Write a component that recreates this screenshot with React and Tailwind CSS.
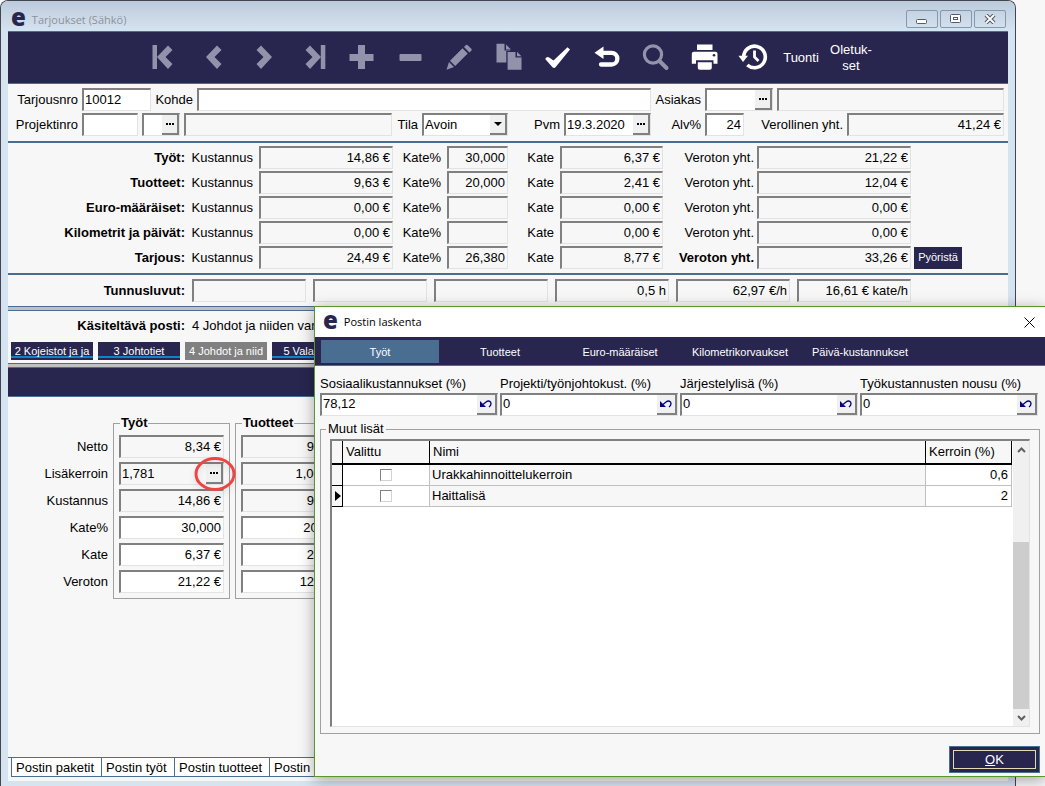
import { useState } from 'react';
import clsx from 'clsx';

const summaryRows = [
  { id: 'tyot', name: 'Työt:', cost: '14,86 €', pct: '30,000', margin: '6,37 €', total: '21,22 €' },
  { id: 'tuotteet', name: 'Tuotteet:', cost: '9,63 €', pct: '20,000', margin: '2,41 €', total: '12,04 €' },
  { id: 'euro', name: 'Euro-määräiset:', cost: '0,00 €', pct: '', margin: '0,00 €', total: '0,00 €' },
  { id: 'km', name: 'Kilometrit ja päivät:', cost: '0,00 €', pct: '', margin: '0,00 €', total: '0,00 €' },
  { id: 'tarjous', name: 'Tarjous:', cost: '24,49 €', pct: '26,380', margin: '8,77 €', total: '33,26 €' },
];

const keyFigures = ['', '', '', '0,5 h', '62,97 €/h', '16,61 € kate/h'];
const postTabs = ['2 Kojeistot ja ja', '3 Johtotiet', '4 Johdot ja niid', '5 Valaisimet'];
const bottomTabs = [
  { label: 'Postin paketit', width: 'w-[90px]' },
  { label: 'Postin työt', width: 'w-[73px]' },
  { label: 'Postin tuotteet', width: 'w-[95px]' },
  { label: 'Postin muut', width: 'w-[90px]' },
];
const dialogTabs = ['Työt', 'Tuotteet', 'Euro-määräiset', 'Kilometrikorvaukset', 'Päivä-kustannukset'];

const dialogFields = [
  { id: 'sosiaali', label: 'Sosiaalikustannukset (%)', value: '78,12' },
  { id: 'projekti', label: 'Projekti/työnjohtokust. (%)', value: '0' },
  { id: 'jarjestely', label: 'Järjestelylisä (%)', value: '0' },
  { id: 'nousu', label: 'Työkustannusten nousu (%)', value: '0' },
];

const extras = [
  { name: 'Urakkahinnoittelukerroin', factor: '0,6' },
  { name: 'Haittalisä', factor: '2' },
];

const postLabels = ['Netto', 'Lisäkerroin', 'Kustannus', 'Kate%', 'Kate', 'Veroton'];
const postColumns = [
  { title: 'Työt', values: ['8,34 €', '1,781', '14,86 €', '30,000', '6,37 €', '21,22 €'] },
  { title: 'Tuotteet', values: ['9,63 €', '1,000', '9,63 €', '20,000', '2,41 €', '12,04 €'] },
];

const sunken = 'border-t-2 border-l-2 border-r border-b border-t-[#808080] border-l-[#808080] border-r-[#e3e3e3] border-b-[#e3e3e3]';

const chevronLeft = '19,2.5 23.5,7 16.5,14 23.5,21 19,26 8,14';
const chevronRight = '14,2.5 9.5,7 16.5,14 9.5,21 14,26 25,14';

const tools = [
  { label: 'Ensimmäinen', icon: <><rect x="3.5" y="2" width="4.5" height="24" /><polygon points={chevronLeft} /></> },
  { label: 'Edellinen', icon: <polygon points={chevronLeft} /> },
  { label: 'Seuraava', icon: <polygon points={chevronRight} /> },
  { label: 'Viimeinen', icon: <><polygon points={chevronRight} /><rect x="24.8" y="2" width="4.5" height="24" /></> },
  { label: 'Lisää', icon: <path d="M13 2h7v9h8.500v7H20v8h-7v-8H4.500v-7H13z" /> },
  { label: 'Poista', icon: <rect x="5.500" y="11" width="22" height="7" rx="1" /> },
  { label: 'Muokkaa', icon: <path d="M3.500 26.700 6 19l5 5zM7 17.800 19.500 5.300l5.200 5.200L12.200 23zM21 3.900l1.700-1.700q1-1 2 0l3.600 3.600q1 1 0 2L26.400 9.400z" /> },
  { label: 'Kopioi', icon: <path d="M4.500.7H12.500V7.500H18V8H14.300V19.500H4.500zM14 1.500 19 6.500H14zM15.600 9H23.500V14.500H29.500V26.700H15.600zM25 8.800l4.500 4.500H25z" /> },
  { label: 'Hyväksy', on: true, icon: <path d="M4.200 16q1.500-3 4-1.500l4.300 3L26.500 4.200l2.500 2.400L14.500 24.300q-1.500 1.500-3 0z" /> },
  { label: 'Peruuta', on: true, icon: <><polygon points="4.5,9.800 13.5,3.500 13.5,16" /><path d="M12 9.800h9.500a5.800 5.800 0 0 1 0 11.700H11" fill="none" stroke="currentColor" strokeWidth="4.300" strokeLinecap="round" /></> },
  { label: 'Hae', icon: <g fill="none" stroke="currentColor"><circle cx="14" cy="11.500" r="8.600" strokeWidth="3.200" /><path d="M20.500 18l7 7" strokeWidth="4" strokeLinecap="round" /></g> },
  { label: 'Tulosta', on: true, icon: <><path d="M9 1.500h15.500v5.500H9zM6 8.800h21.500q2 0 2 2v10h-4v-3.500H8v3.500H3.800v-10q0-2 2.200-2z" /><path d="M9.800 19.300h14v5.500q0 2-2 2h-10q-2 0-2-2z" /><circle cx="26" cy="12.200" r="1.300" fill="#28264f" /></> },
  { label: 'Historia', on: true, icon: <><path d="M6.700 14a10.800 10.800 0 1 1 3.600 8" fill="none" stroke="currentColor" strokeWidth="3.600" /><polygon points="1.5,12.800 11,12.800 6,19" /><path d="M17.500 7.500V14l4 4" fill="none" stroke="currentColor" strokeWidth="2.800" /></> },
];

const Logo = ({ className }) => (
  <span className={clsx("font-['Open_Sans',sans-serif] text-2xl leading-[26px] font-extrabold text-[#28264f]", className)} aria-hidden="true">e</span>
);

const Field = ({ className, white, right, ...props }) => (
  <input
    type="text"
    className={clsx('h-[23px] min-w-0 pr-0.5 pb-0.5 pl-px outline-none', sunken, white ? 'bg-white' : 'bg-[#f7f7f7]', right && 'text-right', className)}
    {...props}
  />
);

const DotsButton = ({ label }) => (
  <button type="button" aria-label={label} className="flex w-[17px] shrink-0 items-center justify-center border-r-2 border-b-2 border-[#808080] bg-[#f0f0f0]">
    <svg width="8" height="2" viewBox="0 0 8 2"><path d="M0 0h2v2H0zM3 0h2v2H3zM6 0h2v2H6z" /></svg>
  </button>
);

const PickerField = ({ className, white, right, buttonLabel, ...props }) => (
  <div className={clsx('flex h-[23px]', sunken, white ? 'bg-white' : 'bg-[#f7f7f7]', className)}>
    <input type="text" className={clsx('w-0 min-w-0 flex-1 pl-px outline-none', right && 'text-right')} {...props} />
    <DotsButton label={buttonLabel} />
  </div>
);

const Divider = () => <div className="h-0.5 bg-[#4a6e91]" />;
const Splitter = () => <div className="h-[5px] shrink-0 border-y border-[#4a6e91] bg-[#c0c0c0]" />;

const TitleBar = () => (
  <header className="flex h-[30px] shrink-0 items-center gap-1.5 bg-linear-to-b from-[#bccbdc] to-[#d6e3f0] pl-2.5">
    <Logo className="pt-0.5" />
    <h1 className="flex-1 pt-2 font-['Open_Sans',sans-serif] text-[11px] text-[#8c9198]">Tarjoukset (Sähkö)</h1>
    <div className="flex gap-0.5 pt-1.5 pr-[9px]">
      <button type="button" aria-label="Pienennä" className="flex h-[18px] w-8 items-center justify-center rounded-xs border border-[#8797ad]">
        <svg width="12" height="10" viewBox="0 0 12 10" fill="#fff" stroke="#555a68"><rect x=".5" y="5.500" width="10" height="4" rx="1" /></svg>
      </button>
      <button type="button" aria-label="Palauta" className="flex h-[18px] w-8 items-center justify-center rounded-xs border border-[#8797ad]">
        <svg width="12" height="10" viewBox="0 0 12 10" fill="#fff" stroke="#555a68"><rect x=".5" y=".5" width="10" height="8" rx="1" /><rect x="3.500" y="3.500" width="4" height="2" /></svg>
      </button>
      <button type="button" aria-label="Sulje" className="flex h-[18px] w-8 items-center justify-center rounded-xs border border-[#8797ad]">
        <svg width="12" height="10" viewBox="0 0 12 10" fill="none"><path d="M2 1l8 8M10 1L2 9" stroke="#555a68" strokeWidth="4" /><path d="M2 1l8 8M10 1L2 9" stroke="#fff" strokeWidth="1.800" /></svg>
      </button>
    </div>
  </header>
);

const Toolbar = () => (
  <nav className="flex h-[53px] shrink-0 items-center border-y border-[#4a6e91] bg-[#28264f] pl-[132px] text-[#9392ab]">
    {tools.map(({ label, on, icon }) => (
      <button key={label} type="button" aria-label={label} className={clsx('flex w-[49px] shrink-0 justify-center pb-0.5', on && 'text-white')}>
        <svg width="32" height="28" viewBox="0 0 32 28" fill="currentColor">{icon}</svg>
      </button>
    ))}
    <button type="button" className="w-12 text-white">Tuonti</button>
    <button type="button" className="w-[52px] leading-4 text-white">Oletuk-<br />set</button>
  </nav>
);

const OfferHeader = () => (
  <section className="flex flex-col gap-0.5 pt-1 pr-1 pb-[5px]">
    <div className="flex items-center gap-1">
      <label htmlFor="tarjousnro" className="w-[70px] text-right">Tarjousnro</label>
      <Field id="tarjousnro" white className="w-[69px]" defaultValue="10012" />
      <label htmlFor="kohde" className="w-[38px] text-right">Kohde</label>
      <Field id="kohde" white className="flex-1" />
      <label htmlFor="asiakas" className="w-[46px] text-right">Asiakas</label>
      <PickerField id="asiakas" white className="w-[68px]" buttonLabel="Valitse asiakas" />
      <Field aria-label="Asiakkaan nimi" readOnly className="w-[227px]" />
    </div>
    <div className="flex items-center gap-1">
      <label htmlFor="projektinro" className="w-[70px] text-right">Projektinro</label>
      <Field id="projektinro" white className="w-14" />
      <PickerField aria-label="Projekti" white className="w-[38px]" buttonLabel="Valitse projekti" />
      <Field aria-label="Projektin nimi" readOnly className="flex-1" />
      <label htmlFor="tila" className="w-[22px] text-right">Tila</label>
      <div className="relative w-[86px]">
        <select id="tila" className={clsx('block h-[23px] w-full appearance-none bg-white px-px outline-none', sunken)} defaultValue="Avoin">
          <option>Avoin</option>
          <option>Hyväksytty</option>
        </select>
        <span className="pointer-events-none absolute top-0.5 right-px bottom-px flex w-[17px] items-center justify-center border-r-2 border-b-2 border-[#808080] bg-[#f0f0f0]">
          <svg width="8" height="4" viewBox="0 0 8 4"><path d="M0 0h8L4 4z" /></svg>
        </span>
      </div>
      <label htmlFor="pvm" className="w-12 text-right">Pvm</label>
      <PickerField id="pvm" white className="w-[87px]" buttonLabel="Valitse päivä" defaultValue="19.3.2020" />
      <label htmlFor="alv" className="w-[46px] text-right">Alv%</label>
      <Field id="alv" white right className="w-[39px]" defaultValue="24" />
      <label htmlFor="verollinen" className="w-[95px] text-right">Verollinen yht.</label>
      <Field id="verollinen" readOnly right className="w-[157px]" value="41,24 €" />
    </div>
  </section>
);

const Summary = () => (
  <section className="flex flex-col gap-0.5 pt-[3px] pb-1">
    {summaryRows.map((row) => {
      const last = row.id === 'tarjous';
      return (
        <div key={row.id} className="flex items-center gap-1.5">
          <span className="w-[177px] text-right font-bold">{row.name}</span>
          <label htmlFor={`${row.id}-cost`} className="w-[62px] text-right">Kustannus</label>
          <Field id={`${row.id}-cost`} readOnly right className="w-[134px]" value={row.cost} />
          <label htmlFor={`${row.id}-pct`} className="w-[42px] text-right">Kate%</label>
          <Field id={`${row.id}-pct`} readOnly right className="w-[61px]" value={row.pct} />
          <label htmlFor={`${row.id}-margin`} className="w-10 text-right">Kate</label>
          <Field id={`${row.id}-margin`} readOnly right className="w-[103px]" value={row.margin} />
          <div className="flex items-center gap-[3px]">
            <label htmlFor={`${row.id}-total`} className={clsx('w-[85px] text-right', last && 'font-bold')}>Veroton yht.</label>
            <Field id={`${row.id}-total`} readOnly right className="w-[154px]" value={row.total} />
            {last && <button type="button" className="h-[22px] w-12 bg-[#28264f] text-[11px] text-white">Pyöristä</button>}
          </div>
        </div>
      );
    })}
  </section>
);

const PostValues = () => (
  <section className="flex pt-[18px]">
    <div className="flex w-[100px] flex-col gap-1 pt-5 text-right">
      {postLabels.map((label) => <span key={label} className="h-[23px] leading-[23px]">{label}</span>)}
    </div>
    {postColumns.map(({ title, values }, col) => (
      <fieldset key={title} className="ml-[5px] w-[117px] border border-[#a0a0a0] px-[5px] pt-1 pb-[5px]">
        <legend className="ml-px px-px leading-4 font-bold">{title}</legend>
        <div className="flex flex-col gap-1">
          {values.map((value, i) => {
            const name = `${title} ${postLabels[i]}`;
            if (i !== 1) {
              return <Field key={name} aria-label={name} white={i > 2} right className="w-full" defaultValue={value} />;
            }
            return (
              <div key={name} className="relative">
                <PickerField aria-label={name} right={col === 1} buttonLabel={`${name} laskenta`} defaultValue={value} />
                {col === 0 && (
                  <svg className="pointer-events-none absolute -top-2 -right-3.5 drop-shadow-md" width="46" height="40" viewBox="0 0 46 40" fill="none">
                    <ellipse cx="23" cy="20" rx="19" ry="15.500" stroke="#f04444" strokeWidth="3" />
                  </svg>
                )}
              </div>
            );
          })}
        </div>
      </fieldset>
    ))}
  </section>
);

const ExtrasTable = () => (
  <table className="w-full table-fixed border-separate border-spacing-0">
    <thead>
      <tr className="h-6 bg-[#f7f7f7] text-left">
        <th className="w-[11px] border-r border-b-2 border-black" aria-label="Rivi" />
        <th className="w-[87px] border-r border-b-2 border-black px-[3px] font-normal">Valittu</th>
        <th className="border-r border-b-2 border-black px-[3px] font-normal">Nimi</th>
        <th className="w-[86px] border-r border-b-2 border-black px-[3px] font-normal">Kerroin (%)</th>
      </tr>
    </thead>
    <tbody>
      {extras.map(({ name, factor }, i) => (
        <tr key={name} className="h-[21px]">
          <td className="border-r border-b border-black bg-[#f7f7f7]">
            {i === 1 && <svg className="ml-[3px]" width="6" height="10" viewBox="0 0 6 10"><path d="M0 0l6 5-6 5z" /></svg>}
          </td>
          <td className="border-r border-b border-[#c0c0c0] text-center">
            <input type="checkbox" aria-label={name} className="mx-auto block size-3 appearance-none border border-t-[#808080] border-r-[#d4d4d4] border-b-[#d4d4d4] border-l-[#808080] bg-white checked:bg-black" />
          </td>
          <td className="border-r border-b border-[#c0c0c0] bg-[#f7f7f7] px-0.5">{name}</td>
          <td className="border-r border-b border-[#c0c0c0] px-[3px] text-right">{factor}</td>
        </tr>
      ))}
    </tbody>
  </table>
);

const PostDialog = ({ onClose }) => {
  const [tab, setTab] = useState(0);

  return (
    <div role="dialog" aria-label="Postin laskenta" className="absolute top-[306px] right-0 left-[314px] border-y border-l border-[#5b962c] bg-[#f7f7f7] shadow-[0_3px_14px_rgba(0,0,0,0.35)]">
      <header className="flex h-[30px] items-center gap-1.5 bg-white pr-2.5 pl-2">
        <Logo className="pb-1" />
        <h2 className="flex-1 font-['Open_Sans',sans-serif] text-[11px]">Postin laskenta</h2>
        <button type="button" aria-label="Sulje" onClick={onClose}>
          <svg width="11" height="11" viewBox="0 0 11 11" stroke="#000"><path d="M.5.5l10 10M10.500.5l-10 10" /></svg>
        </button>
      </header>
      <nav className="flex h-[29px] items-center gap-0.5 border-b border-[#4a6e91] bg-[#28264f] pl-1.5">
        {dialogTabs.map((label, i) => (
          <button key={label} type="button" onClick={() => setTab(i)} className={clsx('h-[23px] w-[118px] pt-0.5 text-[11px] text-white', tab === i && 'bg-[#4a6e91]')}>
            {label}
          </button>
        ))}
      </nav>
      <div className="px-[5px] pt-2.5 pb-[3px]">
        <div className="grid grid-cols-4">
          {dialogFields.map(({ id, label, value }) => (
            <div key={id} className="pr-0.5">
              <label htmlFor={id} className="mb-px block leading-4 whitespace-nowrap">{label}</label>
              <div className={clsx('flex h-[23px] bg-white', sunken)}>
                <input id={id} type="text" className="w-0 flex-1 pb-0.5 pl-px outline-none" defaultValue={value} />
                <button type="button" aria-label={`Palauta ${label}`} className="flex w-5 items-center justify-center border-r-2 border-b-2 border-[#808080] bg-[#f0f0f0]">
                  <svg width="12" height="8" viewBox="0 0 12 8" fill="none" stroke="#000080"><path d="M3 4.500l3-2.500q2.500-2 4.500 0 1.500 2.500-1.500 5" strokeWidth="1.300" /><path d="M0 1v6h6z" fill="#000080" stroke="none" /></svg>
                </button>
              </div>
            </div>
          ))}
        </div>
        <fieldset className="mt-[5px] min-w-0 border border-[#a0a0a0] px-[9px] pt-0.5 pb-1.5">
          <legend className="-ml-1 px-0.5 leading-4">Muut lisät</legend>
          <div className={clsx('flex h-[288px] bg-white', sunken)}>
            <div className="min-w-0 flex-1 pr-px">
              <ExtrasTable />
            </div>
            <div className="flex w-4 flex-col bg-[#f0f0f0]">
              <button type="button" aria-label="Vieritä ylös" className="flex h-[17px] items-center justify-center">
                <svg width="9" height="6" viewBox="0 0 9 6" fill="none" stroke="#606060" strokeWidth="2"><path d="M1 5l3.500-3.500L8 5" /></svg>
              </button>
              <div className="flex-1" />
              <div className="h-[167px] bg-[#cdcdcd]" />
              <button type="button" aria-label="Vieritä alas" className="flex h-[17px] items-center justify-center">
                <svg width="9" height="6" viewBox="0 0 9 6" fill="none" stroke="#606060" strokeWidth="2"><path d="M1 1l3.500 3.500L8 1" /></svg>
              </button>
            </div>
          </div>
        </fieldset>
        <div className="mt-3 flex justify-end">
          <button type="button" onClick={onClose} className="h-[27px] w-[91px] border border-[#4a6e91] bg-[#28264f] p-[3px] text-white">
            <span className="flex h-full items-center justify-center border border-[#e0dcb4]"><u>O</u>K</span>
          </button>
        </div>
      </div>
    </div>
  );
};

const App = () => {
  const [post, setPost] = useState(2);
  const [dialogOpen, setDialogOpen] = useState(true);

  return (
    <div className="relative flex min-h-screen overflow-hidden bg-[#f7f7f7] pr-[29px] font-['Liberation_Sans',Arial,sans-serif] text-[13px] text-black">
      <main className="flex flex-1 flex-col overflow-hidden rounded-t-lg border-x border-t border-[#45454f] bg-[#d6e3f0]">
        <TitleBar />
        <div className="mx-[7px] flex flex-1 flex-col bg-[#f7f7f7]">
          <Toolbar />
          <OfferHeader />
          <Divider />
          <Summary />
          <Divider />
          <section className="flex items-center gap-[7px] py-1">
            <h2 className="w-[177px] text-right font-bold">Tunnusluvut:</h2>
            {keyFigures.map((value, i) => (
              <Field key={i} aria-label={`Tunnusluku ${i + 1}`} readOnly right className="w-[114px]" value={value} />
            ))}
          </section>
          <Splitter />
          <section className="flex gap-[7px] pt-1.5 leading-[18px]">
            <h2 className="w-[177px] text-right font-bold">Käsiteltävä posti:</h2>
            <span>4 Johdot ja niiden varusteet</span>
          </section>
          <div className="flex gap-[5px] pt-[7px] pb-[3px] pl-[3px]">
            {postTabs.map((label, i) => (
              <button
                key={label}
                type="button"
                onClick={() => setPost(i)}
                className={clsx(
                  'h-[18px] w-[82px] border-b-2 pt-px text-[11px] leading-4 whitespace-nowrap text-white',
                  post === i ? 'border-[#808080] bg-[#808080]' : 'border-[#28264f] bg-[#28264f] shadow-[inset_0_-2px_#0a84cc]',
                )}
              >
                {label}
              </button>
            ))}
          </div>
          <Splitter />
          <div className="h-[29px] border-b border-[#4a6e91] bg-[#28264f]" />
          <PostValues />
          <div className="flex-1" />
          <nav className="mb-1 flex h-5 border-t border-[#4a6e91] pl-[3px]">
            {bottomTabs.map(({ label, width }) => (
              <button key={label} type="button" className={clsx('shrink-0 border-b border-l border-[#4a6e91] bg-white px-1 text-left whitespace-nowrap', width)}>{label}</button>
            ))}
          </nav>
        </div>
        <div className="h-[5px] shrink-0" />
      </main>
      {dialogOpen && <PostDialog onClose={() => setDialogOpen(false)} />}
    </div>
  );
};

export default App;
